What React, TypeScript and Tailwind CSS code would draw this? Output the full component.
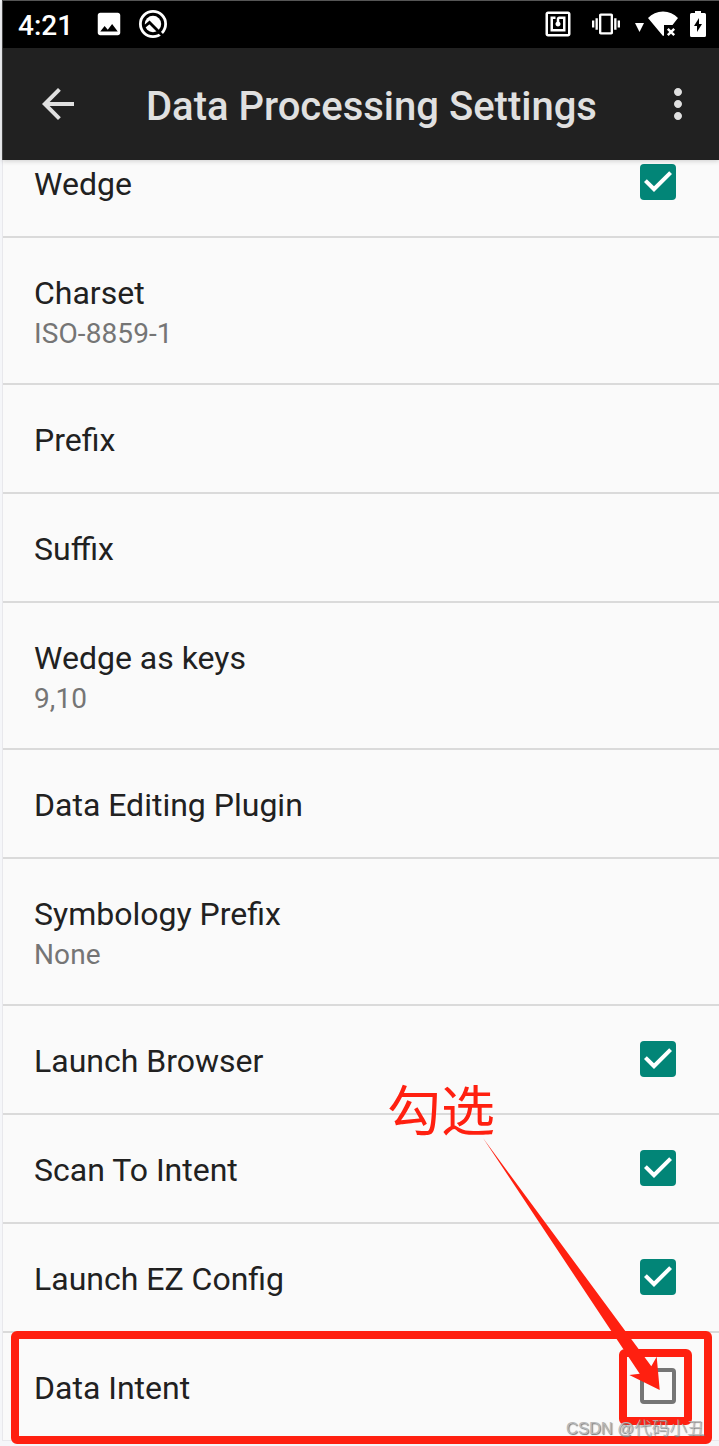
import { MdArrowBack, MdImage, MdMoreVert, MdNfc, MdVibration } from "react-icons/md";

type Setting = {
    title: string;
    value?: string;
    checked?: boolean;
};

const settings: Setting[] = [
    { title: "Wedge", checked: true },
    { title: "Charset", value: "ISO-8859-1" },
    { title: "Prefix" },
    { title: "Suffix" },
    { title: "Wedge as keys", value: "9,10" },
    { title: "Data Editing Plugin" },
    { title: "Symbology Prefix", value: "None" },
    { title: "Launch Browser", checked: true },
    { title: "Scan To Intent", checked: true },
    { title: "Launch EZ Config", checked: true },
    { title: "Data Intent", checked: false },
];

const QIcon = () => (
    <svg width="28" height="28" viewBox="0 0 28 28" fill="none">
        <circle cx="14" cy="14" r="12.6" stroke="white" strokeWidth="2.8" />
        <circle cx="14" cy="14" r="8.2" fill="white" />
        <path d="M4.500 17.500l6-5L23.500 25.500" stroke="black" strokeWidth="2.8" />
    </svg>
);

const WifiOffIcon = () => (
    <svg width="30" height="26" viewBox="0 0 30 26" fill="white">
        <path d="M0 7C4 2.800 9 0.500 15 0.500s11 2.300 15 6.500l-5.500 7H16v10.500l-1 0.500z" />
        <path d="M19.800 17.800l6.400 6.400M26.200 17.800l-6.400 6.400" stroke="white" strokeWidth="2.400" />
    </svg>
);

const BatteryIcon = () => (
    <svg width="16" height="26" viewBox="0 0 16 26">
        <path d="M5 0h6v2h3.500q1.500 0 1.500 1.500v21q0 1.500-1.500 1.500h-13Q0 26 0 24.500v-21Q0 2 1.500 2H5z" fill="white" />
        <path d="M9 7v6h3l-5 8v-6H4z" fill="black" />
    </svg>
);

const Checkbox = ({ checked }: { checked: boolean }) => {
    if (!checked) {
        return <div className="mt-[35px] size-9 rounded border-4 border-[#757575]" />;
    }

    return (
        <div className="mt-[35px] size-9 rounded bg-[#028577]">
            <svg width="36" height="36" viewBox="3 3 18 18" fill="white">
                <path d="M10 17l-5-5 1.410-1.410L10 14.170l7.590-7.590L19 8z" />
            </svg>
        </div>
    );
};

const StatusBar = () => (
    <div className="flex h-12 items-center border-t border-[#555] bg-black text-white">
        <span className="mt-0.5 ml-[15px] w-[76px] text-[28px] leading-none font-medium">4:21</span>
        <MdImage size={30} className="-mt-px" />
        <div className="-mt-px ml-[15px]">
            <QIcon />
        </div>
        <div className="ml-auto flex items-center pr-[13px]">
            <MdNfc size={30} className="-mt-px" />
            <MdVibration size={28} className="-mt-px ml-[19px]" />
            <svg width="9" height="9" viewBox="0 0 9 9" className="mt-1.5 ml-[15px]" fill="white">
                <path d="M0 0h9L4.500 9z" />
            </svg>
            <div className="-mt-px ml-1">
                <WifiOffIcon />
            </div>
            <div className="-mt-px ml-3">
                <BatteryIcon />
            </div>
        </div>
    </div>
);

const AppBar = () => (
    <header className="flex h-28 items-center bg-[#212121] pr-[17px] pl-[31px] text-[#e0e0e0]">
        <MdArrowBack size={48} />
        <h1 className="mt-1.5 ml-16 text-[40px] font-medium whitespace-nowrap">Data Processing Settings</h1>
        <MdMoreVert size={48} className="ml-auto" />
    </header>
);

const SettingRow = ({ title, value, checked }: Setting) => (
    <li className="flex justify-between border-b-2 border-[#dadada] pr-[43px] pl-[31px] last:border-b last:border-[#e8e8ec]">
        <div className={value ? "h-[145px] pt-9" : "h-[107px] pt-9"}>
            <p className="text-[32px] leading-[38px] text-[#212121]">{title}</p>
            {value && <p className="mt-[5px] text-[28px] leading-[33px] tracking-[0.1px] text-[#757575]">{value}</p>}
        </div>
        {checked !== undefined && <Checkbox checked={checked} />}
    </li>
);

const Annotations = () => (
    <div className="pointer-events-none absolute inset-0">
        <div className="absolute top-[1331px] left-[11px] h-[113px] w-[701px] rounded-md border-8 border-[#ff2010]" />
        <div className="absolute top-[1349px] left-[619px] h-[76px] w-[73px] rounded-md border-8 border-[#ff2010]" />
        <svg className="absolute inset-0" width="719" height="1446" fill="#ff2010">
            <path d="M483 1138L651.300 1366.300 656.700 1356.700 659.700 1390 629.300 1375 639.700 1373.700z" />
        </svg>
        <p className="absolute top-[1070px] left-[387px] font-['Noto_Sans_CJK_SC',sans-serif] text-[54px] leading-[76px] text-[#ff2010]">
            勾选
        </p>
        <p className="absolute top-[1415px] left-[566px] font-['Liberation_Sans',sans-serif] text-[16.5px] leading-6 whitespace-nowrap text-[#b8b8b8] [text-shadow:1px_1px_1px_#777]">
            CSDN @
            <span className="font-['Noto_Sans_CJK_SC',sans-serif] text-[17.6px] font-light">代码小丑</span>
        </p>
    </div>
);

const App = () => {
    return (
        <div className="relative h-[1446px] w-[719px] overflow-hidden bg-[#f5f6f9] pl-0.5 font-[Roboto,sans-serif]">
            <div className="relative z-10 border-l border-[#444] shadow-[0_1px_5px_rgba(0,0,0,0.18)]">
                <StatusBar />
                <AppBar />
            </div>
            <ul className="-mt-[31px] border-l border-[#e8e8ec] bg-[#fafafa]">
                {settings.map((setting) => (
                    <SettingRow key={setting.title} {...setting} />
                ))}
            </ul>
            <Annotations />
        </div>
    );
};

export default App;
